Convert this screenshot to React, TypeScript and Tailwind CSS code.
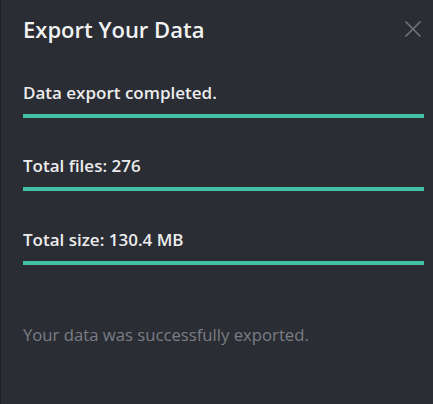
import React from 'react';

const Stat: React.FC<{ label: string; className?: string }> = ({ label, className }) => (
  <div className={className}>
    <p className="text-[17px] leading-[22px] font-semibold text-[#ececec]">{label}</p>
    <div className="mt-[10px] h-[4px] w-full bg-[#43bfa5]" />
  </div>
);

export default function App() {
  return (
    <div
      className="w-[433px] h-[404px] bg-[#2a2d34] border-l border-[#1e2025] pl-[22px] pr-[9px]"
      style={{ fontFamily: '"Open Sans", "Noto Sans", sans-serif' }}
    >
      <div className="flex items-center justify-between pt-[15px]">
        <h1 className="text-[22px] leading-[28px] font-semibold text-[#f2f2f2]">Export Your Data</h1>
        <button className="text-[#6f737a] mr-[2px]" aria-label="Close">
          <svg width="18" height="18" viewBox="0 0 18 18" fill="none" stroke="currentColor" strokeWidth="1.6">
            <path d="M1.5 1.5 L16.5 16.5 M16.5 1.5 L1.5 16.5" />
          </svg>
        </button>
      </div>

      <div>
        <Stat label="Data export completed." className="mt-[39px]" />
        <Stat label="Total files: 276" className="mt-[37px]" />
        <Stat label="Total size: 130.4 MB" className="mt-[38px]" />
      </div>

      <p className="mt-[59px] text-[16.7px] leading-[22px] text-[#7b7e84]">Your data was successfully exported.</p>
    </div>
  );
}
